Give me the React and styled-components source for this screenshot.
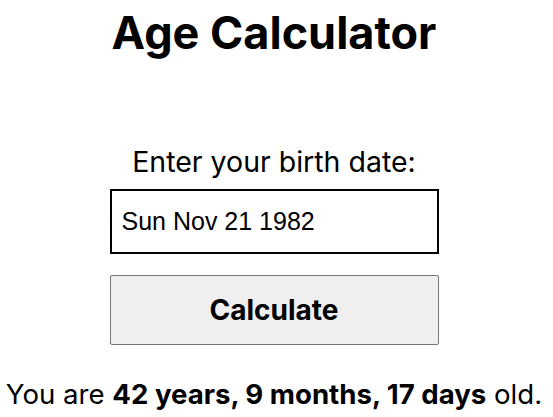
import styled, { createGlobalStyle } from "styled-components";

const GlobalStyle = createGlobalStyle`
  body {
    margin: 0;
    background: #fff;
    font-family: "Inter", "Noto Sans", sans-serif;
    color: #000;
  }
`;

const Page = styled.main`
  display: flex;
  flex-direction: column;
  align-items: center;
  width: 548px;
  height: 417px;
`;

const Title = styled.h1`
  margin: 6px 0 0;
  font-size: 45px;
  font-weight: 700;
  line-height: 54px;
`;

const Form = styled.form`
  display: flex;
  flex-direction: column;
  align-items: center;
  margin-top: 85px;
`;

const Label = styled.label`
  font-size: 28.5px;
  line-height: 34px;
`;

const DateInput = styled.input`
  box-sizing: border-box;
  width: 329px;
  height: 65px;
  margin-top: 10px;
  padding: 0 10px;
  border: 2.5px solid #000;
  border-radius: 0;
  font-family: "Liberation Sans", Arial, sans-serif;
  font-size: 25px;
  color: #000;
  outline: none;
`;

const Button = styled.button`
  box-sizing: border-box;
  width: 329px;
  height: 70px;
  margin-top: 21px;
  border: 1px solid #767676;
  border-radius: 2px;
  background: #efefef;
  font-family: "Inter", sans-serif;
  font-size: 28px;
  font-weight: 700;
  color: #000;
`;

const Result = styled.p`
  margin: 32px 0 0;
  font-size: 27.6px;
  line-height: 34px;
  white-space: nowrap;
`;

export default function App() {
  return (
    <>
      <GlobalStyle />
      <Page>
        <Title>Age Calculator</Title>
        <Form onSubmit={(e) => e.preventDefault()}>
          <Label htmlFor="birth">Enter your birth date:</Label>
          <DateInput id="birth" type="text" defaultValue="Sun Nov 21 1982" />
          <Button type="submit">Calculate</Button>
        </Form>
        <Result>
          You are <b>42 years, 9 months, 17 days</b> old.
        </Result>
      </Page>
    </>
  );
}
